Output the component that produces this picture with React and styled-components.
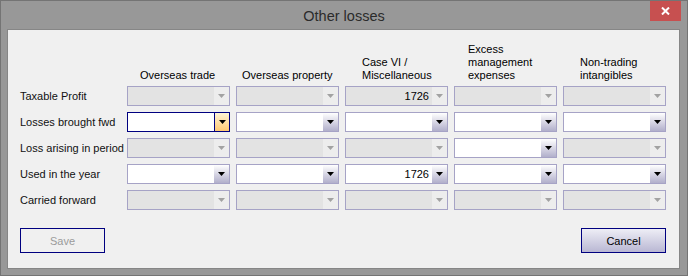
import React from "react";
import styled, { createGlobalStyle, css } from "styled-components";

const Global = createGlobalStyle`
  html, body { margin: 0; padding: 0; background: #999; }
  body { font-family: "Liberation Sans", Arial, sans-serif; }
  * { box-sizing: border-box; }
`;

const Frame = styled.div`
  width: 688px;
  height: 276px;
  background: #989898;
  border: 1px solid #747474;
  display: flex;
  flex-direction: column;
`;

const TitleBar = styled.div`
  height: 29px;
  display: grid;
  grid-template-columns: 1fr auto 1fr;
  align-items: center;
`;

const Title = styled.div`
  grid-column: 2;
  font-size: 14.5px;
  color: #2b2b2b;
  padding-top: 1px;
`;

const CloseButton = styled.div`
  grid-column: 3;
  justify-self: end;
  align-self: start;
  width: 31px;
  height: 20px;
  margin-right: 6px;
  background: #c75050;
  display: flex;
  align-items: center;
  justify-content: center;
`;

const Client = styled.div`
  flex: 1;
  margin: 0 7px 6px 6px;
  background: #f0f0f0;
  border: 1px solid #868686;
  padding: 13px 13px 15px 12px;
  display: flex;
  flex-direction: column;
`;

const Grid = styled.div`
  display: grid;
  grid-template-columns: 101px repeat(5, 103px);
  column-gap: 6px;
  row-gap: 6px;
  font-size: 11px;
  color: #000;
`;

const Header = styled.div`
  align-self: end;
  line-height: 13px;
  margin-bottom: -2px;
  padding-left: ${(p) => p.$indent}px;
  white-space: nowrap;
`;

const RowLabel = styled.div`
  align-self: center;
  white-space: nowrap;
  color: #111;
`;

const Combo = styled.div`
  height: 20px;
  display: flex;
  border: 1px solid ${(p) => (p.$focused ? "#000080" : "#a6a3c6")};
  background: ${(p) => (p.$disabled ? "#e3e3e3" : "#ffffff")};
`;

const ComboText = styled.div`
  flex: 1;
  display: flex;
  align-items: center;
  justify-content: flex-end;
  padding-right: 3px;
  font-size: 11px;
  color: #000;
`;

const ComboButton = styled.div`
  width: 15px;
  display: flex;
  align-items: center;
  justify-content: center;
  ${(p) =>
    p.$disabled
      ? css`
          background: #ededed;
        `
      : p.$focused
      ? css`
          border-left: 1px solid #000080;
          background: linear-gradient(#fff4d6, #ffc873);
        `
      : css`
          background: linear-gradient(#ffffff, #b1afcb);
        `}
`;

const Arrow = ({ color }) => (
  <svg width="7" height="4" viewBox="0 0 7 4">
    <polygon points="0,0 7,0 3.5,4" fill={color} />
  </svg>
);

const ButtonRow = styled.div`
  margin-top: 18px;
  display: flex;
  justify-content: space-between;
`;

const Button = styled.div`
  width: 85px;
  height: 25px;
  border: 1px solid #000080;
  display: flex;
  align-items: center;
  justify-content: center;
  font-size: 11px;
  color: ${(p) => (p.$disabled ? "#9b9b9b" : "#000")};
  background: ${(p) =>
    p.$disabled ? "#f0f0f0" : "linear-gradient(#eeeef6, #b9b7d3)"};
`;

const ComboBox = ({ disabled, focused, value }) => (
  <Combo $disabled={disabled} $focused={focused}>
    <ComboText>{value}</ComboText>
    <ComboButton $disabled={disabled} $focused={focused}>
      <Arrow color={disabled ? "#a2a2a2" : "#000"} />
    </ComboButton>
  </Combo>
);

const headers = [
  { indent: 13, lines: ["Overseas trade"] },
  { indent: 6, lines: ["Overseas property"] },
  { indent: 17, lines: ["Case VI /", "Miscellaneous"] },
  { indent: 14, lines: ["Excess", "management", "expenses"] },
  { indent: 17, lines: ["Non-trading", "intangibles"] },
];

const rows = [
  { label: "Taxable Profit", cells: [{ d: 1 }, { d: 1 }, { d: 1, v: "1726" }, { d: 1 }, { d: 1 }] },
  { label: "Losses brought fwd", cells: [{ f: 1 }, {}, {}, {}, {}] },
  { label: "Loss arising in period", cells: [{ d: 1 }, { d: 1 }, { d: 1 }, {}, { d: 1 }] },
  { label: "Used in the year", cells: [{}, {}, { v: "1726" }, {}, {}] },
  { label: "Carried forward", cells: [{ d: 1 }, { d: 1 }, { d: 1 }, { d: 1 }, { d: 1 }] },
];

export default function App() {
  return (
    <>
      <Global />
      <Frame>
        <TitleBar>
          <Title>Other losses</Title>
          <CloseButton>
            <svg width="9" height="8" viewBox="0 0 9 8">
              <path d="M1 0.5 L8 7.5 M8 0.5 L1 7.5" stroke="#fff" strokeWidth="2" />
            </svg>
          </CloseButton>
        </TitleBar>
        <Client>
          <Grid>
            <div />
            {headers.map((h, i) => (
              <Header key={i} $indent={h.indent}>
                {h.lines.map((l, j) => (
                  <div key={j}>{l}</div>
                ))}
              </Header>
            ))}
            {rows.map((r) => (
              <React.Fragment key={r.label}>
                <RowLabel>{r.label}</RowLabel>
                {r.cells.map((c, i) => (
                  <ComboBox key={i} disabled={!!c.d} focused={!!c.f} value={c.v} />
                ))}
              </React.Fragment>
            ))}
          </Grid>
          <ButtonRow>
            <Button $disabled>Save</Button>
            <Button>Cancel</Button>
          </ButtonRow>
        </Client>
      </Frame>
    </>
  );
}
